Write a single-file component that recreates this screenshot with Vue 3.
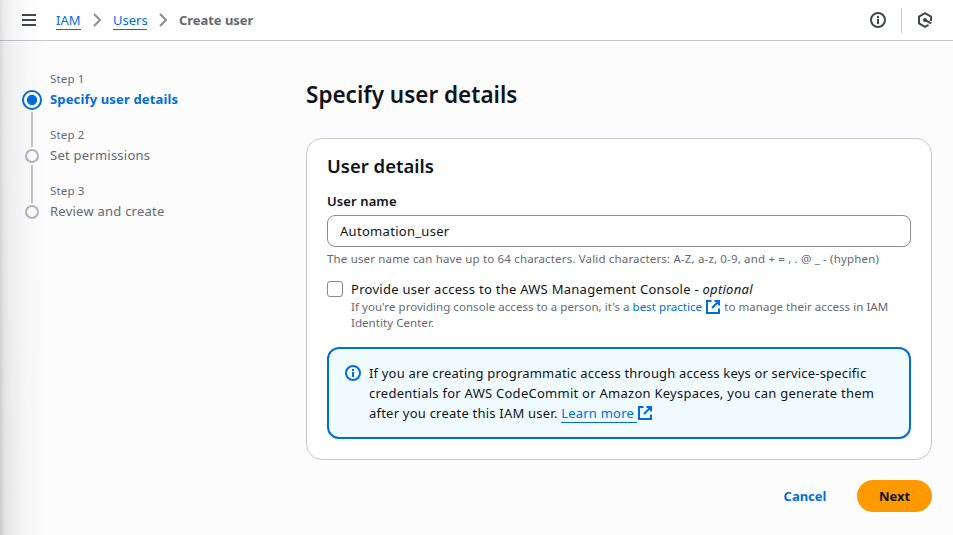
<script setup>
import { ref } from 'vue'

const steps = [
  { label: 'Step 1', title: 'Specify user details', active: true },
  { label: 'Step 2', title: 'Set permissions', active: false },
  { label: 'Step 3', title: 'Review and create', active: false },
]
const userName = ref('Automation_user')
const consoleAccess = ref(false)
</script>

<template>
  <div class="page">
    <header class="topbar">
      <svg class="menu" viewBox="0 0 14 12"><path d="M0 1h14M0 6h14M0 11h14" /></svg>
      <nav class="crumbs">
        <a class="crumb iam">IAM</a>
        <svg class="chevron" viewBox="0 0 8 14"><path d="M1 1l6 6-6 6" /></svg>
        <a class="crumb users">Users</a>
        <svg class="chevron" viewBox="0 0 8 14"><path d="M1 1l6 6-6 6" /></svg>
        <span class="current">Create user</span>
      </nav>
      <div class="tools">
        <svg class="info" viewBox="0 0 16 16"><circle cx="8" cy="8" r="7" /><path d="M8 4v2M8 7v5" /></svg>
        <span class="divider"></span>
        <svg class="hex" viewBox="0 0 16 16">
          <path d="M14 9V4.600L8 1.200 2 4.600v6.800l6 3.400 3.500-2" /><path d="M8 8l6.300 3.400" />
          <circle cx="8" cy="8" r="2" />
        </svg>
      </div>
    </header>

    <div class="body">
      <ol class="steps">
        <li v-for="step in steps" :key="step.label" class="step" :class="{ active: step.active }">
          <span class="rail"><i class="dot"></i><i class="line"></i></span>
          <span class="step-text">
            <span class="step-label">{{ step.label }}</span>
            <span class="step-title">{{ step.title }}</span>
          </span>
        </li>
      </ol>

      <main class="main">
        <h1>Specify user details</h1>
        <section class="card">
          <h2>User details</h2>
          <label class="label" for="user">User name</label>
          <input id="user" v-model="userName" class="input" type="text" />
          <p class="hint">The user name can have up to 64 characters. Valid characters: A-Z, a-z, 0-9, and + = , . @ _ - (hyphen)</p>
          <div class="option">
            <input id="console" v-model="consoleAccess" class="check" type="checkbox" />
            <div>
              <label class="option-title" for="console">Provide user access to the AWS Management Console - <em>optional</em></label>
              <p class="option-hint">
                If you're providing console access to a person, it's a <a>best practice</a>
                <svg class="ext" viewBox="0 0 14 14"><path d="M5.500 1H1v12h12V8.500M8.500 1H13v4.500M13 1L6 8" /></svg>
                to manage their access in IAM<br />Identity Center.
              </p>
            </div>
          </div>
          <div class="alert">
            <svg class="info" viewBox="0 0 16 16"><circle cx="8" cy="8" r="7" /><path d="M8 4v2M8 7v5" /></svg>
            <p>
              <span class="l1">If you are creating programmatic access through access keys or service-specific</span><br />
              <span class="l2">credentials for AWS CodeCommit or Amazon Keyspaces, you can generate them</span><br />
              <span class="l3">after you create this IAM user. <a class="learn">Learn more</a></span><svg class="ext" viewBox="0 0 14 14"><path d="M5.500 1H1v12h12V8.500M8.500 1H13v4.500M13 1L6 8" /></svg>
            </p>
          </div>
        </section>
        <div class="actions">
          <button class="cancel">Cancel</button>
          <button class="next">Next</button>
        </div>
      </main>
    </div>
    <div class="edge"></div>
  </div>
</template>

<style>
body {
  margin: 0;
  overflow: hidden;
}
</style>

<style scoped>
* {
  box-sizing: border-box;
}
.page {
  position: relative;
  width: 100%;
  height: 535px;
  background: #fcfcfd;
  color: #0f141a;
  font: 13px/20px "Noto Sans", "Open Sans", sans-serif;
  overflow: hidden;
}
.edge {
  position: absolute;
  inset: 0 auto 0 0;
  width: 46px;
  background: linear-gradient(90deg, rgba(0, 0, 0, 0.2), rgba(0, 0, 0, 0.1) 10%, rgba(0, 0, 0, 0.06) 30%, rgba(0, 0, 0, 0.025) 60%, transparent);
  mask-image: linear-gradient(180deg, rgba(0, 0, 0, 0.65), #000);
  pointer-events: none;
}
svg {
  fill: none;
  stroke: currentColor;
  stroke-width: 2;
  flex: none;
}
p,
h1,
h2,
ol {
  margin: 0;
  padding: 0;
}
a {
  color: #006ce0;
}
.topbar {
  height: 41px;
  display: flex;
  align-items: center;
  padding: 0 20px 0 22px;
  background: #fff;
  border-bottom: 1px solid #c6c6cd;
}
.menu {
  width: 14px;
  height: 12px;
  color: #424650;
}
.crumbs {
  display: flex;
  align-items: center;
  margin-left: 20px;
}
.crumb {
  height: 20px;
  border-bottom: 1px solid #006ce0;
}
.iam {
  width: 25px;
}
.users {
  width: 34px;
}
.chevron {
  width: 8px;
  height: 14px;
  margin: 0 12px;
  color: #8c8c94;
}
.current {
  font-weight: 700;
  letter-spacing: -0.05px;
  color: #656871;
}
.tools {
  display: flex;
  align-items: center;
  margin-left: auto;
  color: #424650;
}
.info {
  width: 16px;
  height: 16px;
}
.divider {
  width: 1px;
  height: 25px;
  margin: 0 15px;
  background: #c6c6cd;
}
.hex {
  width: 16px;
  height: 16px;
}
.hex circle {
  fill: currentColor;
  stroke: none;
}
.body {
  display: flex;
}
.steps {
  list-style: none;
  width: 306px;
  padding: 28px 0 0 22px;
}
.step {
  display: flex;
  height: 56px;
  color: #656871;
}
.rail {
  width: 20px;
  margin-right: 8px;
  display: flex;
  flex-direction: column;
  align-items: center;
  padding-top: 24px;
}
.dot {
  flex: none;
  width: 14px;
  height: 14px;
  border: 2px solid #b4b4bb;
  border-radius: 50%;
}
.line {
  flex: none;
  width: 2px;
  height: 38px;
  margin-top: 2px;
  background: #c6c6cd;
}
.step:last-child .line {
  display: none;
}
.active .rail {
  padding-top: 21px;
}
.active .dot {
  width: 20px;
  height: 20px;
  border-color: #006ce0;
  background: radial-gradient(circle, #006ce0 4.700px, #fff 5.500px);
}
.active .line {
  height: 35px;
}
.step-text {
  display: flex;
  flex-direction: column;
}
.step-label {
  font-size: 11.500px;
  letter-spacing: 0.15px;
}
.step-title {
  letter-spacing: 0.24px;
}
.active .step-title {
  color: #006ce0;
  font-weight: 700;
  letter-spacing: 0.15px;
}
.main {
  width: 626px;
  padding-top: 39px;
}
h1 {
  font-size: 22.500px;
  line-height: 30px;
  font-weight: 600;
}
.card {
  margin-top: 28px;
  height: 322px;
  padding: 15px 20px;
  background: #fff;
  border: 1px solid #c6c6cd;
  border-radius: 16px;
}
h2 {
  font-size: 18.500px;
  line-height: 24px;
  font-weight: 600;
}
.label {
  display: block;
  margin-top: 13px;
  letter-spacing: 0.1px;
  font-weight: 600;
}
.input {
  display: block;
  width: 100%;
  height: 32px;
  margin-top: 4px;
  padding: 0 12px;
  border: 1px solid #8c8c94;
  border-radius: 8px;
  background: #fff;
  color: inherit;
  font: inherit;
  letter-spacing: 0.3px;
}
.hint {
  margin-top: 4px;
  font-size: 11.500px;
  letter-spacing: 0.165px;
  line-height: 16px;
  color: #656871;
  white-space: nowrap;
}
.option {
  display: flex;
  gap: 8px;
  margin-top: 12px;
  white-space: nowrap;
}
.check {
  appearance: none;
  flex: none;
  width: 16px;
  height: 16px;
  margin: 2px 0 0;
  border: 1px solid #8c8c94;
  border-radius: 3px;
}
.option-title {
  display: block;
  letter-spacing: 0.27px;
}
.option-hint {
  font-size: 11.500px;
  letter-spacing: 0.05px;
  line-height: 16px;
  color: #656871;
}
.ext {
  width: 14px;
  height: 14px;
  color: #006ce0;
  vertical-align: -2px;
}
.option-hint .ext {
  margin: -2px 1px 0 4px;
  vertical-align: -3px;
}
.alert {
  display: flex;
  gap: 8px;
  height: 92px;
  margin-top: 16px;
  padding: 14px 16px;
  border: 2px solid #006ce0;
  border-radius: 12px;
  background: #f0fbff;
  white-space: nowrap;
}
.alert .info {
  margin-top: 2px;
  color: #006ce0;
}
.l1 {
  letter-spacing: 0.18px;
}
.l2 {
  letter-spacing: 0.26px;
}
.l3 {
  letter-spacing: 0.22px;
}
.learn {
  display: inline-block;
  height: 20px;
  width: 76px;
  border-bottom: 1px solid #006ce0;
}
.alert .ext {
  margin-left: 1px;
}
.actions {
  display: flex;
  justify-content: flex-end;
  margin-top: 20px;
}
.actions button {
  height: 32px;
  padding: 0;
  border: 0;
  border-radius: 16px;
  font: inherit;
  font-weight: 700;
  text-align: center;
}
.cancel {
  width: 84px;
  margin-right: 10px;
  background: none;
  color: #006ce0;
}
.next {
  width: 75px;
  background: #ff9900;
  color: #0f141a;
}
</style>
